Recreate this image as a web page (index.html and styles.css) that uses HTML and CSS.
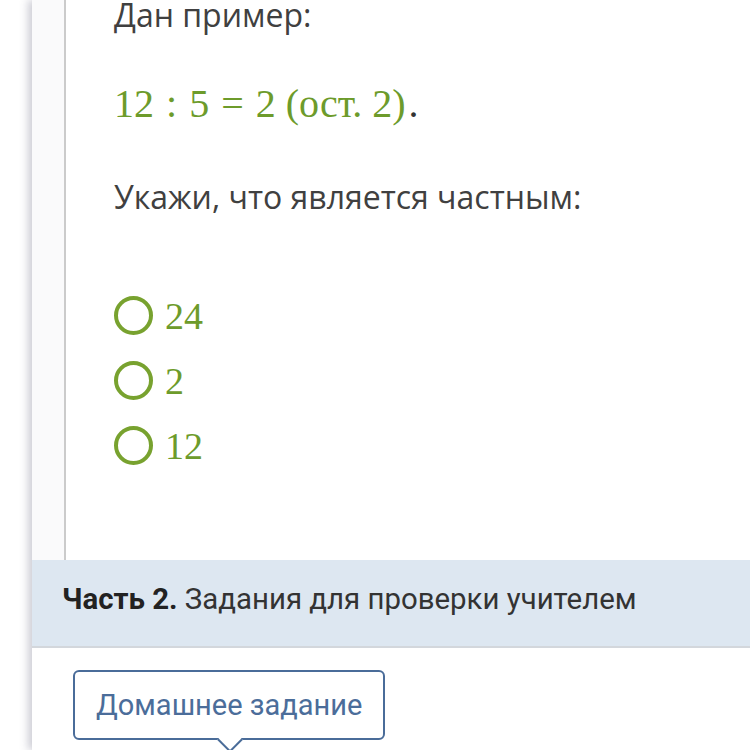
FILE: index.html
```html
<!DOCTYPE html>
<html lang="ru">
<head>
    <meta charset="UTF-8">
    <meta name="viewport" content="width=device-width, initial-scale=1.0">
    <title>Задание</title>
    <link rel="stylesheet" href="styles.css">
</head>
<body>
    <div class="page">
        <div class="task">
            <p class="lead">Дан пример:</p>
            <p class="math">12<span class="op">:</span>5<span class="op">=</span>2<span class="rest">(ост. 2)</span><span class="dot">.</span></p>
            <p class="question">Укажи, что является частным:</p>
            <ul class="answers">
                <li><span class="radio"></span>24</li>
                <li><span class="radio"></span>2</li>
                <li><span class="radio"></span>12</li>
            </ul>
        </div>
        <div class="part-head">
            <b>Часть 2.</b> Задания для проверки учителем
        </div>
        <div class="homework">
            <div class="hw-tab">Домашнее задание</div>
        </div>
    </div>
</body>
</html>
```

FILE: styles.css
```css
body {
    margin: 0;
    padding: 0;
    background: #fff;
    height: 750px;
    overflow: hidden;
}

.page {
    margin-left: 32px;
    background: #fafafb;
    box-shadow: -4px 0 8px rgba(60, 60, 90, .25);
    height: 750px;
}

.task {
    margin-left: 32px;
    border-left: 2px solid #cbcbcb;
    background: #fff;
    padding-left: 48px;
    height: 560px;
    box-sizing: border-box;
    font-family: "Open Sans", sans-serif;
    color: #404040;
    overflow: hidden;
}

.lead {
    margin: 0;
    font-size: 32px;
    line-height: 30px;
}

.math {
    margin: 50px 0 0;
    font-family: "Liberation Serif", serif;
    font-size: 40px;
    line-height: 48px;
    color: #6d9b2b;
}

.op {
    margin: 0 12px;
}

.rest {
    margin-left: 10px;
}

.dot {
    margin-left: 3px;
    color: #333;
}

.question {
    margin: 49px 0 0;
    font-size: 32px;
    line-height: 40px;
}

.answers {
    list-style: none;
    margin: 66px 0 0;
    padding: 0;
}

.answers li {
    display: flex;
    align-items: center;
    height: 65px;
    font-family: "Liberation Serif", serif;
    font-size: 38px;
    color: #6d9b2b;
}

.radio {
    width: 31px;
    height: 31px;
    border: 4px solid #78a22f;
    border-radius: 50%;
    margin-right: 12px;
}

.part-head {
    background: #dde7f1;
    border-bottom: 2px solid #d3d7dc;
    height: 88px;
    box-sizing: border-box;
    padding: 22px 0 0 30px;
    font-family: "Roboto", sans-serif;
    font-size: 29.4px;
    color: #333;
}

.part-head b {
    color: #222;
}

.homework {
    background: #fff;
    padding: 22px 0 0 41px;
    height: 102px;
    box-sizing: border-box;
}

.hw-tab {
    position: relative;
    display: inline-block;
    border: 2px solid #4a6c99;
    border-radius: 6px;
    padding: 16px 21px;
    font-family: "Roboto", sans-serif;
    font-size: 29px;
    color: #4b6d9a;
}

.hw-tab::after {
    content: "";
    position: absolute;
    left: 146px;
    bottom: -11px;
    width: 16px;
    height: 16px;
    background: #fff;
    border-right: 2px solid #4a6c99;
    border-bottom: 2px solid #4a6c99;
    transform: rotate(45deg);
}
```
